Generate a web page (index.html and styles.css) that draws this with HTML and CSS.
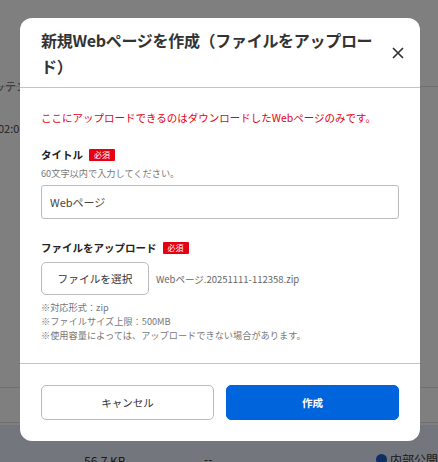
FILE: index.html
```html
<!DOCTYPE html>
<html lang="ja">
<head>
<meta charset="utf-8">
<link rel="stylesheet" href="styles.css">
</head>
<body>
<div class="bg">
  <div class="bg-row bg-row1"><span class="bg-t1">ッテン</span></div>
  <div class="bg-row bg-row2"><span class="bg-t2">02:0</span></div>
  <div class="bg-row bg-row3"></div>
  <div class="bg-row bg-row4"></div>
  <div class="bg-bottom">
    <span class="bg-size">56.7 KB</span>
    <span class="bg-dash">--</span>
    <span class="bg-pub"><span class="bg-icon"></span>内部公開</span>
  </div>
</div>
<div class="overlay">
  <div class="modal">
    <div class="modal-head">
      <h1 class="modal-title">新規Webページを作成（ファイルをアップロード）</h1>
      <button class="close" aria-label="閉じる">
        <svg width="12" height="12" viewBox="0 0 12 12"><path d="M1 1L11 11M11 1L1 11" stroke="#333" stroke-width="1.7" fill="none"/></svg>
      </button>
    </div>
    <div class="modal-body">
      <p class="notice">ここにアップロードできるのはダウンロードしたWebページのみです。</p>
      <div class="field">
        <div class="label">タイトル<span class="req">必須</span></div>
        <div class="hint">60文字以内で入力してください。</div>
        <div class="input">Webページ</div>
      </div>
      <div class="field field2">
        <div class="label">ファイルをアップロード<span class="req">必須</span></div>
        <div class="file-row">
          <button class="file-btn">ファイルを選択</button>
          <span class="file-name">Webページ.20251111-112358.zip</span>
        </div>
        <div class="notes">
          <div>※対応形式：zip</div>
          <div>※ファイルサイズ上限：500MB</div>
          <div>※使用容量によっては、アップロードできない場合があります。</div>
        </div>
      </div>
    </div>
    <div class="modal-foot">
      <button class="btn btn-cancel">キャンセル</button>
      <button class="btn btn-primary">作成</button>
    </div>
  </div>
</div>
</body>
</html>
```
FILE: styles.css
```css
* { box-sizing: border-box; }
html, body { margin: 0; padding: 0; }
body {
  width: 438px;
  height: 462px;
  overflow: hidden;
  position: relative;
  font-family: "Noto Sans CJK JP", "Noto Sans", sans-serif;
  color: #333;
  background: #fff;
}
.bg { width: 438px; height: 462px; background: #fff; }
.bg-row { height: 0; border-bottom: 1px solid #ddd; position: relative; }
.bg-row1 { margin-top: 86px; }
.bg-t1 { position: absolute; left: -6px; top: -8px; font-size: 11px; color: #666; }
.bg-row2 { margin-top: 0; border: none; }
.bg-t2 { position: absolute; left: -2px; top: 33px; font-size: 11px; color: #444; }
.bg-row3 { margin-top: 300px; }
.bg-row4 { margin-top: 34px; }
.bg-bottom { position: relative; height: 41px; background: #e6eefb; margin-top: 2px; }
.bg-size { position: absolute; left: 84px; top: 27px; font-size: 12px; color: #333; }
.bg-dash { position: absolute; left: 204px; top: 25px; font-size: 12px; color: #333; }
.bg-pub { position: absolute; left: 376px; top: 26px; font-size: 12px; color: #333; display: flex; align-items: center; gap: 3px; }
.bg-icon { width: 11px; height: 11px; border-radius: 50%; background: #1a5fc8; display: inline-block; }

.overlay {
  position: absolute;
  inset: 0;
  background: rgba(0,0,0,0.5);
  padding: 18px 18px 0 20px;
}
.modal {
  width: 400px;
  height: 423px;
  background: #fff;
  border-radius: 12px;
  display: flex;
  flex-direction: column;
}
.modal-head {
  display: flex;
  align-items: center;
  padding: 9px 16px 8px 21px;
  border-bottom: 1px solid #c4c4c4;
  gap: 0;
}
.modal-title {
  margin: 0;
  flex: 1;
  font-size: 16px;
  letter-spacing: -0.3px;
  line-height: 26px;
  font-weight: 700;
  color: #333;
}
.close {
  border: none;
  background: none;
  padding: 0;
  width: 12px;
  height: 12px;
  display: flex;
  flex-shrink: 0;
  cursor: pointer;
}
.modal-body {
  flex: 1;
  padding: 22px 21px 0 21px;
  border-bottom: 1px solid #c4c4c4;
}
.notice {
  margin: 0;
  color: #e60012;
  font-size: 10.5px;
  line-height: 16px;
}
.field { margin-top: 20px; }
.field2 { margin-top: 20px; }
.label {
  font-size: 10.5px;
  font-weight: 700;
  color: #222;
  line-height: 18px;
  display: flex;
  align-items: center;
}
.req {
  display: inline-block;
  background: #e60012;
  color: #fff;
  font-size: 8px;
  font-weight: 400;
  line-height: 12px;
  height: 12px;
  padding: 0 5px;
  border-radius: 1px;
  margin-left: 6px;
}
.hint {
  font-size: 9.2px;
  color: #777;
  line-height: 14px;
  margin-top: 2px;
}
.input {
  margin-top: 5px;
  height: 34px;
  border: 1px solid #bbb;
  border-radius: 3px;
  padding: 0 8px;
  font-size: 11px;
  display: flex;
  align-items: center;
  color: #444;
}
.file-row {
  margin-top: 5px;
  display: flex;
  align-items: center;
  gap: 7px;
}
.file-btn {
  font-family: inherit;
  width: 108px;
  height: 33px;
  border: 1px solid #bbb;
  border-radius: 5px;
  background: #fff;
  font-size: 10.7px;
  color: #333;
  padding: 0;
}
.file-name { font-size: 9.5px; color: #666; }
.notes {
  margin-top: 5px;
  font-size: 9.2px;
  line-height: 14px;
  color: #777;
}
.modal-foot {
  display: flex;
  gap: 12px;
  padding: 21px 21px 21px 21px;
}
.btn {
  flex: 1;
  height: 35px;
  font-family: inherit;
  font-size: 10.5px;
  border-radius: 5px;
  padding: 0;
}
.btn-cancel {
  background: #fff;
  border: 1px solid #bbb;
  color: #333;
}
.btn-primary {
  background: #0064dc;
  border: 1px solid #0064dc;
  color: #fff;
  font-weight: 700;
}
```
